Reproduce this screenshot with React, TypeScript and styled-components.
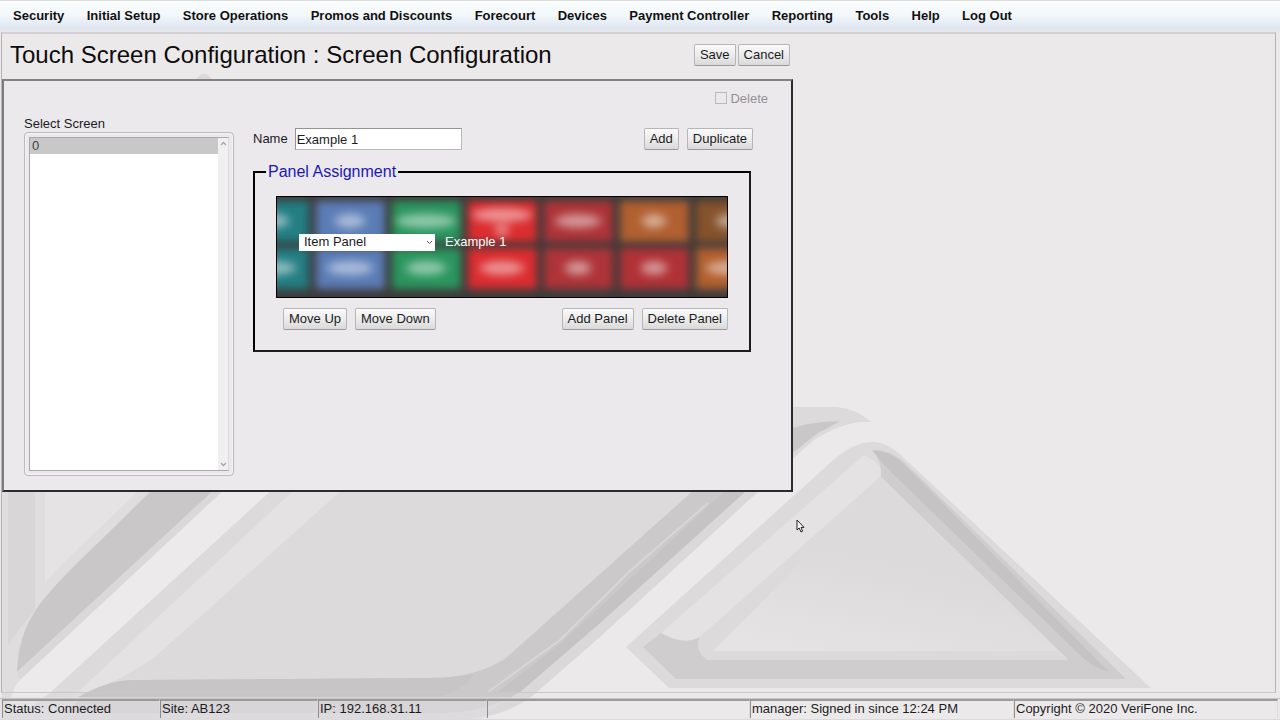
import React from "react";
import styled, { createGlobalStyle } from "styled-components";

const GlobalStyle = createGlobalStyle`
  * { box-sizing: border-box; }
  body {
    margin: 0;
    background: #ece9ea;
    color: #1c1c1e;
    font: 13px/16px "Liberation Sans", Arial, sans-serif;
  }
  button, input, select { font: inherit; color: inherit; }
`;

const Page = styled.div`
  position: relative;
  isolation: isolate;
  display: flex;
  flex-direction: column;
  min-height: 100vh;
`;

const Backdrop = styled.svg`
  position: absolute;
  inset: 0;
  z-index: -1;
  width: 100%;
  height: 100%;
`;

const MenuBar = styled.nav`
  height: 32px;
  padding: 0 13px;
  border-top: 1px solid #dcdcdc;
  border-bottom: 1px solid #e8e8ea;
  background: linear-gradient(#fafefe, #f3f8fb 45%, #dfe6f1 90%, #e2e6ec);
`;

const MenuItems = styled.div`
  display: flex;
  align-items: center;
  justify-content: space-between;
  max-width: 999px;
  height: 30px;
`;

const MenuLink = styled.a`
  color: #111;
  font-weight: bold;
  text-decoration: none;
  white-space: nowrap;
`;

const Workspace = styled.main`
  flex: 1;
  margin: 0 4px 0 1px;
  border: 1px solid #b4b2b4;
  border-top: 2px solid #d2d0d2;
  border-bottom-color: #c9c9c9;
`;

const TitleBar = styled.header`
  display: flex;
  align-items: center;
  justify-content: space-between;
  width: 100%;
  max-width: 790px;
  height: 45px;
  padding: 0 2px 3px 8px;
`;

const Title = styled.h1`
  margin: 0;
  color: #0c0c0c;
  font-size: 24px;
  line-height: 28px;
  font-weight: normal;
`;

const ButtonGroup = styled.div<{ $gap?: number }>`
  display: flex;
  gap: ${(p) => p.$gap ?? 8}px;
`;

const Button = styled.button`
  height: 22px;
  padding: 0 5px;
  border: 1px solid #b6b6b8;
  border-bottom-color: #999;
  border-radius: 2px;
  background: linear-gradient(#fafafa, #ececec 50%, #dadada);
  line-height: 18px;
  white-space: nowrap;
`;

const Panel = styled.section`
  width: 100%;
  max-width: 791px;
  padding: 9px 22px 14px 20px;
  border: 2px solid #2b2a2d;
  border-top-color: #858284;
  border-left-color: #7c7c7c;
  background: #ebe9ec;
`;

const DeleteRow = styled.label`
  display: flex;
  align-items: center;
  justify-content: flex-end;
  gap: 3px;
  height: 18px;
  padding-right: 1px;
  color: #939193;
`;

const CheckBox = styled.input`
  appearance: none;
  width: 12px;
  height: 12px;
  margin: 0 0 2px;
  border: 1px solid #b9b9b9;
  background: #ebe9ea;
`;

const Columns = styled.div`
  display: grid;
  grid-template-columns: 210px 1fr;
  gap: 19px;
  padding-top: 8px;
`;

const ListColumn = styled.div`
  display: flex;
  flex-direction: column;
`;

const ListFrame = styled.div`
  padding: 4px;
  border: 1px solid #bcbabc;
  border-radius: 4px;
  box-shadow: inset 0 0 0 1px #f4f3f4;
`;

const ListBody = styled.div`
  display: flex;
  height: 334px;
  border: 1px solid #a9a9ab;
  border-right-color: #dcdcdc;
  background: #fff;
`;

const ScreenList = styled.select`
  flex: 1;
  min-width: 0;
  padding: 0;
  border: 0;
  border-radius: 0;
  outline: 0;
  background: #fff;
  color: #444;
  overflow: hidden;
  option {
    height: 16px;
    min-height: 16px;
    padding: 0 2px;
    line-height: 16px;
  }
  option:checked {
    background: #c8c8c8 linear-gradient(#c8c8c8, #c8c8c8);
    color: #444;
  }
`;

const ScrollTrack = styled.div`
  display: flex;
  flex-direction: column;
  justify-content: space-between;
  align-items: center;
  width: 10px;
  padding: 3px 0;
  background: #f1f0f1;
`;

const Editor = styled.div`
  padding: 11px 16px 0 0;
`;

const NameRow = styled.div`
  display: flex;
  align-items: center;
  justify-content: space-between;
  height: 24px;
`;

const NameField = styled.label`
  display: flex;
  align-items: center;
  gap: 7px;
`;

const TextInput = styled.input`
  width: 167px;
  height: 22px;
  padding: 0 1px;
  border: 1px solid #b8b8b8;
  border-top-color: #949494;
  border-left-color: #949494;
  background: #fff;
`;

const Assignment = styled.fieldset`
  min-width: 0;
  margin: 11px 2px 0 0;
  padding: 14px 21px 20px;
  border: 2px solid #1d1d20;
  border-top-color: #000;
  border-left-color: #000;
`;

const Legend = styled.legend`
  margin-left: -10px;
  padding: 0 2px;
  color: #1b18b4;
  font-size: 16px;
  line-height: 20px;
`;

const Preview = styled.div`
  position: relative;
  isolation: isolate;
  display: flex;
  align-items: center;
  gap: 10px;
  height: 102px;
  padding: 0 22px 10px;
  border: 1px solid #000;
  background: #3d3b3b;
  overflow: hidden;
  color: #fff;
`;

const PreviewArt = styled.svg`
  position: absolute;
  inset: 0;
  z-index: -1;
  width: 100%;
  height: 100%;
`;

const SelectWrap = styled.span`
  position: relative;
  display: flex;
  color: #1c1c1e;
`;

const PanelSelect = styled.select`
  appearance: none;
  width: 136px;
  height: 17px;
  padding: 0 5px;
  border: 0;
  border-radius: 0;
  background: #fff;
  line-height: 16px;
`;

const SelectArrow = styled.svg`
  position: absolute;
  right: 2px;
  top: 6px;
  pointer-events: none;
`;

const PanelActions = styled.div`
  display: flex;
  justify-content: space-between;
  padding: 10px 0 0 7px;
`;

const StatusBar = styled.footer`
  display: grid;
  grid-template-columns: 158fr 158fr 169fr 263fr 264fr 264fr;
  margin-top: 5px;
  padding: 0 2px 1px;
  border-top: 1px solid #c6c6c6;
  border-bottom: 1px solid #dadada;
`;

const StatusCell = styled.div`
  height: 19px;
  padding-left: 1px;
  border-top: 2px solid #9b9b9b;
  border-left: 1px solid #8d8d8d;
  border-right: 1px solid #dcdcdc;
  line-height: 16px;
  white-space: nowrap;
`;

const Pointer = styled.svg`
  position: absolute;
  left: 796px;
  top: 519px;
`;

const menu = [
  "Security", "Initial Setup", "Store Operations", "Promos and Discounts",
  "Forecourt", "Devices", "Payment Controller", "Reporting", "Tools", "Help", "Log Out",
];

const statuses = [
  "Status: Connected", "Site: AB123", "IP: 192.168.31.11", "",
  "manager: Signed in since 12:24 PM", "Copyright © 2020 VeriFone Inc.",
];

type Tile = { color: string; glow: number };

const tileRows: Tile[][] = [
  [
    { color: "#237e84", glow: 30 }, { color: "#5b7db6", glow: 30 }, { color: "#2b965f", glow: 60 },
    { color: "#dc2d30", glow: 60 }, { color: "#ae3438", glow: 46 }, { color: "#b16030", glow: 24 },
    { color: "#86532c", glow: 28 },
  ],
  [
    { color: "#237e84", glow: 44 }, { color: "#5b7db6", glow: 46 }, { color: "#2b965f", glow: 40 },
    { color: "#dc2d30", glow: 44 }, { color: "#ae3438", glow: 26 }, { color: "#b03236", glow: 26 },
    { color: "#b3602f", glow: 48 },
  ],
];

const Artwork = () => (
  <Backdrop viewBox="0 0 1280 720" preserveAspectRatio="xMinYMax slice" aria-hidden="true">
    <defs>
      <linearGradient id="sheen" x1="0.2" y1="1" x2="0.45" y2="0.45">
        <stop offset="0" stopColor="#e5e3e4" />
        <stop offset="1" stopColor="#dcdadb" />
      </linearGradient>
    </defs>
    <path d="M195 82C199 71 209 71 213 82Z" fill="#dcdadb" />
    <path d="M2 490H340V720H2Z" fill="#dfddde" />
    <path d="M45 490H139L98 530Q60 565 45 583Z" fill="#e5e3e4" />
    <path d="M8 490H35V610Q18 630 8 645Z" fill="#d8d6d7" />
    <path d="M152 490L98 543Q65 574 49 593Q18 626 17 672L214 490Z" fill="#c9c7c8" />
    <path d="M214 490H224L20 680L17 672Z" fill="#dad8d9" />
    <path d="M224 490H272L50 693L24 712L10 712Q10 690 20 680Z" fill="#edeaeb" />
    <path d="M272 490H294L80 690L50 712H24L50 693Z" fill="#dcdadb" />
    <path d="M294 490H342L208 610L155 657Q128 677 86 693L80 690Z" fill="#e4e2e3" />
    <path d="M342 490H702L600 580L514 653Q487 679 445 679H135Q105 683 86 693Q128 677 155 657L208 610Z" fill="#dcdadb" />
    <path d="M86 693Q110 680 135 680L430 678Q476 678 506 658L694 490H760L600 637L537 692Q505 720 450 720H60Z" fill="#dad8d9" />
    <path d="M86 693Q110 680 135 680L430 678Q476 678 506 658L694 490H747L600 623L520 692Q485 713 440 713H65Z" fill="#cbc9ca" />
    <path d="M86 693Q110 680 135 680L430 678Q455 678 474 674Q466 688 440 697H78Z" fill="#c8c5c6" />
    <path d="M726 490H747L600 623L520 692H498L560 644Z" fill="#c6c3c4" />
    <path d="M708 503L630 571L560 640L488 692" fill="none" stroke="#d8d6d7" strokeWidth="2" />
    <path d="M0 697H510L480 720H0Z" fill="#dfdddf" opacity="0.6" />

    <path d="M780 407H837Q857 409 871 422H860Q840 424 814 440L780 470Z" fill="#dcdadb" />
    <path d="M780 432Q810 421 840 421Q828 428 818 433L780 463Z" fill="#cac7c8" />
    <path d="M873 442Q852 442 830 463L626 647L669 688H1151L906 460Q889 442 873 442Z" fill="#dcdadb" />
    <path d="M864 455L661 633Q684 646 700 637L877 480Q890 468 864 455Z" fill="#e4e2e3" />
    <path d="M661 633L643 647L676 679H1126L903 461Q886 448 872 450Q882 460 881 477L1068 660H707Q694 650 700 637Q684 646 661 633Z" fill="#d0cdce" />
    <path d="M873 451Q888 450 903 463L1109 672Q1092 667 1082 657L894 475Q881 462 873 451Z" fill="#c6c3c4" />
    <path d="M877 480L700 637Q694 650 707 659H1068L881 477Z" fill="#dcdadb" />
    <path d="M757 607L713 651H1058L877 484Z" fill="url(#sheen)" />
  </Backdrop>
);

const PreviewPicture = () => (
  <PreviewArt viewBox="0 0 450 100" preserveAspectRatio="xMidYMid slice" aria-hidden="true">
    <defs>
      <filter id="soft" x="-30%" y="-40%" width="160%" height="180%" colorInterpolationFilters="sRGB">
        <feGaussianBlur stdDeviation="4" />
      </filter>
      <filter id="glow" x="-100%" y="-200%" width="300%" height="500%" colorInterpolationFilters="sRGB">
        <feGaussianBlur stdDeviation="5 4" />
      </filter>
    </defs>
    {tileRows.map((row, r) =>
      row.map((tile, c) => {
        const x = -37 + c * 76;
        const y = r === 0 ? 4 : 51;
        return (
          <g key={`${r}-${c}`}>
            <rect x={x} y={y} width="69" height="41" fill={tile.color} filter="url(#soft)" />
            <ellipse cx={x + 34} cy={y + (r === 0 && c === 3 ? 14 : 20)} rx={tile.glow / 2} ry="7" fill="#fff" opacity="0.48" filter="url(#glow)" />
          </g>
        );
      }),
    )}
    <ellipse cx="225" cy="33" rx="7" ry="7" fill="#fff" opacity="0.4" filter="url(#glow)" />
  </PreviewArt>
);

const Chevron = ({ up = false }: { up?: boolean }) => (
  <svg width="7" height="5" viewBox="0 0 7 5" aria-hidden="true">
    <path d={up ? "M1 4L3.5 1.5L6 4" : "M1 1L3.5 3.5L6 1"} fill="none" stroke="#a6a6a6" strokeWidth="1.3" />
  </svg>
);

export default function App() {
  return (
    <Page>
      <GlobalStyle />
      <Artwork />
      <MenuBar>
        <MenuItems>
          {menu.map((item) => (
            <MenuLink key={item} href="#">{item}</MenuLink>
          ))}
        </MenuItems>
      </MenuBar>
      <Workspace>
        <TitleBar>
          <Title>Touch Screen Configuration : Screen Configuration</Title>
          <ButtonGroup $gap={2}>
            <Button type="button">Save</Button>
            <Button type="button">Cancel</Button>
          </ButtonGroup>
        </TitleBar>
        <Panel>
          <DeleteRow>
            <CheckBox type="checkbox" disabled />
            Delete
          </DeleteRow>
          <Columns>
            <ListColumn>
              <label htmlFor="screens">Select Screen</label>
              <ListFrame>
                <ListBody>
                  <ScreenList id="screens" size={20} defaultValue="0">
                    <option value="0">0</option>
                  </ScreenList>
                  <ScrollTrack>
                    <Chevron up />
                    <Chevron />
                  </ScrollTrack>
                </ListBody>
              </ListFrame>
            </ListColumn>
            <Editor>
              <NameRow>
                <NameField>
                  Name
                  <TextInput type="text" defaultValue="Example 1" />
                </NameField>
                <ButtonGroup>
                  <Button type="button">Add</Button>
                  <Button type="button">Duplicate</Button>
                </ButtonGroup>
              </NameRow>
              <Assignment>
                <Legend>Panel Assignment</Legend>
                <Preview>
                  <PreviewPicture />
                  <SelectWrap>
                    <PanelSelect aria-label="Panel type" defaultValue="item">
                      <option value="item">Item Panel</option>
                    </PanelSelect>
                    <SelectArrow width="7" height="5" viewBox="0 0 7 5" aria-hidden="true">
                      <path d="M1 1L3.5 3.5L6 1" fill="none" stroke="#555" />
                    </SelectArrow>
                  </SelectWrap>
                  <span>Example 1</span>
                </Preview>
                <PanelActions>
                  <ButtonGroup>
                    <Button type="button">Move Up</Button>
                    <Button type="button">Move Down</Button>
                  </ButtonGroup>
                  <ButtonGroup>
                    <Button type="button">Add Panel</Button>
                    <Button type="button">Delete Panel</Button>
                  </ButtonGroup>
                </PanelActions>
              </Assignment>
            </Editor>
          </Columns>
        </Panel>
      </Workspace>
      <StatusBar>
        {statuses.map((text, i) => (
          <StatusCell key={i}>{text}</StatusCell>
        ))}
      </StatusBar>
      <Pointer width="9" height="14" viewBox="0 0 9 14" aria-hidden="true">
        <path d="M1 1V11L3.2 9L5 13L6.6 12.2L5 8.4H8Z" fill="#fff" stroke="#222" />
      </Pointer>
    </Page>
  );
}
